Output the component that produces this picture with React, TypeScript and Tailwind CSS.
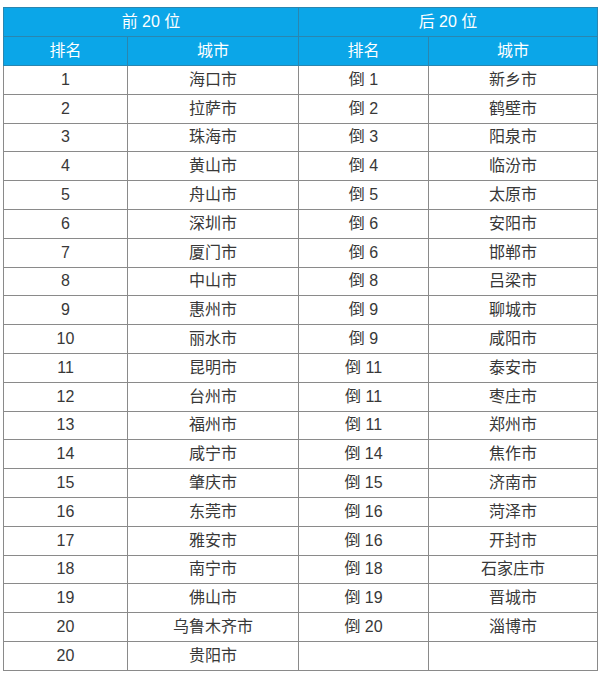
const rows: [string, string, string, string][] = [
  ["1", "海口市", "倒 1", "新乡市"],
  ["2", "拉萨市", "倒 2", "鹤壁市"],
  ["3", "珠海市", "倒 3", "阳泉市"],
  ["4", "黄山市", "倒 4", "临汾市"],
  ["5", "舟山市", "倒 5", "太原市"],
  ["6", "深圳市", "倒 6", "安阳市"],
  ["7", "厦门市", "倒 6", "邯郸市"],
  ["8", "中山市", "倒 8", "吕梁市"],
  ["9", "惠州市", "倒 9", "聊城市"],
  ["10", "丽水市", "倒 9", "咸阳市"],
  ["11", "昆明市", "倒 11", "泰安市"],
  ["12", "台州市", "倒 11", "枣庄市"],
  ["13", "福州市", "倒 11", "郑州市"],
  ["14", "咸宁市", "倒 14", "焦作市"],
  ["15", "肇庆市", "倒 15", "济南市"],
  ["16", "东莞市", "倒 16", "菏泽市"],
  ["17", "雅安市", "倒 16", "开封市"],
  ["18", "南宁市", "倒 18", "石家庄市"],
  ["19", "佛山市", "倒 19", "晋城市"],
  ["20", "乌鲁木齐市", "倒 20", "淄博市"],
  ["20", "贵阳市", "", ""],
];

const head = "border border-[#2a86b0] bg-[#0ba6e8] text-white font-normal text-[16px] h-[29px] p-0";
const cell = "border border-[#8a8a8a] text-[#383838] text-[16px] h-[28.8px] p-0";

export default function App() {
  return (
    <div className="bg-white w-[600px] h-[676px] pt-[7px] pl-[3px] font-['Liberation_Sans','Noto_Sans_CJK_SC',sans-serif]">
      <table className="border-collapse table-fixed w-[594px] text-center">
        <colgroup>
          <col className="w-[124px]" />
          <col className="w-[171px]" />
          <col className="w-[130px]" />
          <col className="w-[169px]" />
        </colgroup>
        <thead>
          <tr>
            <th colSpan={2} className={head}>前 20 位</th>
            <th colSpan={2} className={head}>后 20 位</th>
          </tr>
          <tr>
            <th className={head}>排名</th>
            <th className={head}>城市</th>
            <th className={head}>排名</th>
            <th className={head}>城市</th>
          </tr>
        </thead>
        <tbody>
          {rows.map((r, i) => (
            <tr key={i}>
              {r.map((c, j) => (
                <td key={j} className={cell}>{c}</td>
              ))}
            </tr>
          ))}
        </tbody>
      </table>
    </div>
  );
}
